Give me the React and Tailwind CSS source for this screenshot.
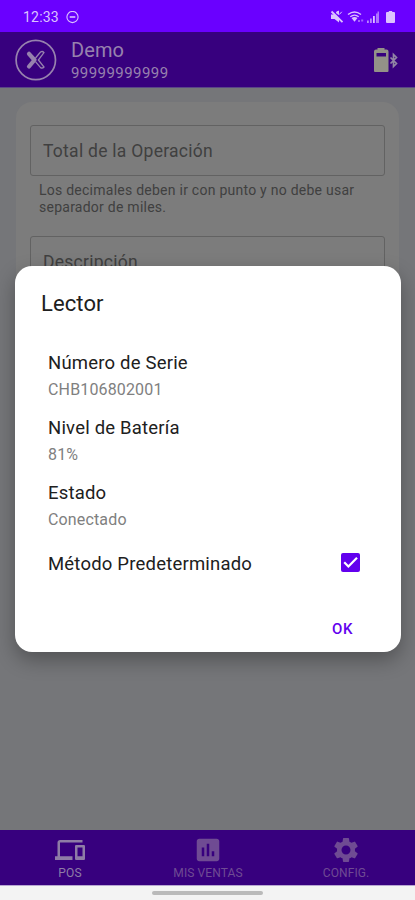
import { useState } from "react";
import { MdAssessment, MdDevices, MdSettings } from "react-icons/md";

const tabs = [
  { label: "POS", icon: MdDevices, size: 30, color: "text-[#8e7ca6]" },
  { label: "MIS VENTAS", icon: MdAssessment, size: 30, color: "text-[#6f4b93]" },
  { label: "CONFIG.", icon: MdSettings, size: 30, color: "text-[#6f4b93]" },
];

const readerInfo = [
  { label: "Número de Serie", value: "CHB106802001" },
  { label: "Nivel de Batería", value: "81%" },
  { label: "Estado", value: "Conectado" },
];

const StatusBar = () => (
  <div className="h-8 shrink-0 bg-[#6a00ff] flex items-center justify-between pl-[23px] pr-[19px] pt-[2px] text-[#dcc2ff]">
    <div className="flex items-center gap-[7px]">
      <span className="text-[14px] leading-4 tracking-[0.2px]">12:33</span>
      <svg className="w-[13px] h-[13px]" viewBox="0 0 13 13" fill="none" stroke="currentColor" strokeWidth="1.1">
        <circle cx="6.5" cy="6" r="5.6" />
        <path d="M3.7 6h5.6" strokeWidth="1.6" />
      </svg>
    </div>
    <svg className="w-[66px] h-[14px]" viewBox="0 0 66 14" fill="currentColor">
      {/* Muted speaker */}
      <path d="M1 4.500h4L9 8v4.500L4.500 9H1z" />
      <path d="M1.500 1.500L12.500 12.200" stroke="currentColor" strokeWidth="1.800" />
      <path d="M6 2.500l2.500-1.500v3.500zM9.300 4.500l2.500-2.700" stroke="currentColor" strokeWidth="1" />
      {/* Wifi */}
      <g fill="none" stroke="currentColor" strokeWidth="1.400">
        <path d="M18 4.500q6.500-5 13 0M20.300 6.800q4.200-3.400 8.400 0" />
      </g>
      <path d="M21.500 8q3-2.200 6 0l-3 3.800z" />
      <path d="M28 11h2M31.200 10.500h2" stroke="currentColor" strokeWidth="2" opacity=".5" />
      {/* Signal */}
      <path d="M37 10.500h1.800V13H37zM40 8.500h1.800V13H40z" opacity=".7" />
      <path d="M43 6h1.800v7H43z" />
      <path d="M46 3.500h1.500V13H46zM47.500 1.500h1.500V13h-1.500z" opacity=".6" />
      {/* Battery */}
      <path d="M58.800 1h3.400v1h1.800q1 0 1 1v9q0 1-1 1h-7q-1 0-1-1V3q0-1 1-1h1.800z" />
    </svg>
  </div>
);

const Header = () => (
  <header className="h-14 shrink-0 bg-[#37007e] border-b border-[#5a4687] flex items-center pl-[15px] pr-[15px] text-[#9782ae]">
    <svg className="w-[42px] h-[42px]" viewBox="0 0 42 42" fill="none" stroke="currentColor">
      <circle cx="20.800" cy="21" r="19.700" strokeWidth="1.700" />
      <path d="M14 14.800l5.500 6.200-5.500 6.500" strokeWidth="4.200" strokeLinecap="round" strokeLinejoin="round" />
      <path d="M20.500 19l5-6q2-1.200 3.500.6l-5.600 7.400 5.600 7q-1.500 1.800-3.500.6l-5-6" strokeWidth="1.300" />
    </svg>
    <div className="ml-[14px] flex-1 pt-[4px]">
      <div className="text-[20px] leading-6 tracking-[0.1px]">Demo</div>
      <div className="text-[15px] leading-[23px] tracking-[0.44px]">99999999999</div>
    </div>
    {/* Reader battery */}
    <svg className="w-[28px] h-[26px]" viewBox="0 0 28 26">
      <path d="M5.500 1h7v1.500h2q2 0 2 2V24q0 1-1 1H3q-1 0-1-1V4.500q0-2 2-2h1.500z" fill="#939188" />
      <path d="M4.500 6h9.500v3.500H4.500z" fill="#37007e" />
      <path d="M18.500 10.500l6 6-3 3v-12l3 3-6 6" fill="none" stroke="#9286a5" strokeWidth="1.700" />
    </svg>
  </header>
);

const OperationForm = () => (
  <main className="flex-1 min-h-0 bg-[#757679] px-4 pt-[14px]">
    <div className="h-[500px] rounded-2xl bg-[#7c7c7c] px-[14px] pt-[23px] text-[#404040]">
      <div className="h-[51px] w-[355px] border border-[#626262] rounded-[3px] flex items-center px-3 pt-[2px] text-[17.5px] tracking-[0.27px]">
        Total de la Operación
      </div>
      <p className="mt-[6px] ml-[9px] text-[14px] leading-[17px] tracking-[0.25px] whitespace-nowrap">
        Los decimales deben ir con punto y no debe usar
        <br />
        separador de miles.
      </p>
      <div className="mt-5 h-[51px] w-[355px] border border-[#626262] rounded-[3px] flex items-center px-3 pt-[2px] text-[17.5px] tracking-[0.27px]">
        Descripción
      </div>
    </div>
  </main>
);

const ReaderDialog = () => {
  const [isDefault, setIsDefault] = useState(true);

  return (
    <div
      role="dialog"
      className="absolute left-[15px] top-[266px] w-[386px] h-[386px] bg-white rounded-[17px] shadow-[0_8px_20px_rgba(0,0,0,0.3)] pl-[33px] pr-[41px] text-[#202020]"
    >
      <h2 className="-ml-[7px] mt-6 text-[22px] leading-[28px] tracking-[0.1px]">Lector</h2>
      <dl className="mt-[31px] mb-[6px]">
        {readerInfo.map((item) => (
          <div key={item.label} className="h-[65px]">
            <dt className="text-[18.5px] leading-[28px] tracking-[0.2px]">{item.label}</dt>
            <dd className="text-[16px] leading-[25px] tracking-[0.15px] text-[#808080]">{item.value}</dd>
          </div>
        ))}
      </dl>
      <div className="h-7 flex items-center justify-between">
        <span className="text-[18.5px] leading-7 tracking-[0.2px]">Método Predeterminado</span>
        <button
          type="button"
          role="checkbox"
          aria-checked={isDefault}
          aria-label="Método Predeterminado"
          onClick={() => setIsDefault(!isDefault)}
          className="w-[19px] h-[19px] -mt-[3px] rounded-[2px] bg-[#6200ee] flex items-center justify-center text-white cursor-pointer"
        >
          {isDefault && (
            <svg className="w-[19px] h-[19px]" viewBox="0 0 19 19" fill="none" stroke="currentColor" strokeWidth="2.2">
              <path d="M3.200 9.300l4.200 4.200 8.600-8.700" />
            </svg>
          )}
        </button>
      </div>
      <div className="mt-[39px] mr-[7px] flex justify-end">
        <button type="button" className="text-[15px] leading-6 font-medium tracking-[0.6px] text-[#6200ee] cursor-pointer">
          OK
        </button>
      </div>
    </div>
  );
};

const BottomNav = () => (
  <nav className="h-[55px] shrink-0 bg-[#37007e] grid grid-cols-3 pl-[1px]">
    {tabs.map(({ label, icon: Icon, size, color }) => (
      <div key={label} className={`flex flex-col items-center pt-[4px] ${color}`}>
        <div className="h-8 flex items-center">
          <Icon size={size} />
        </div>
        <span className="text-[12px] leading-[14px] tracking-[0.1px]">{label}</span>
      </div>
    ))}
  </nav>
);

const App = () => {
  return (
    <div className="relative w-[415px] h-[900px] flex flex-col overflow-hidden font-[Roboto,sans-serif]">
      <StatusBar />
      <Header />
      <OperationForm />
      <BottomNav />
      <div className="h-[15px] shrink-0 bg-[#f3f3f3] border-t border-[#b8a6d2] flex justify-center pt-[5px]">
        <div className="w-[111px] h-[4px] rounded-full bg-[#bababa]" />
      </div>
      <ReaderDialog />
    </div>
  );
};

export default App;
